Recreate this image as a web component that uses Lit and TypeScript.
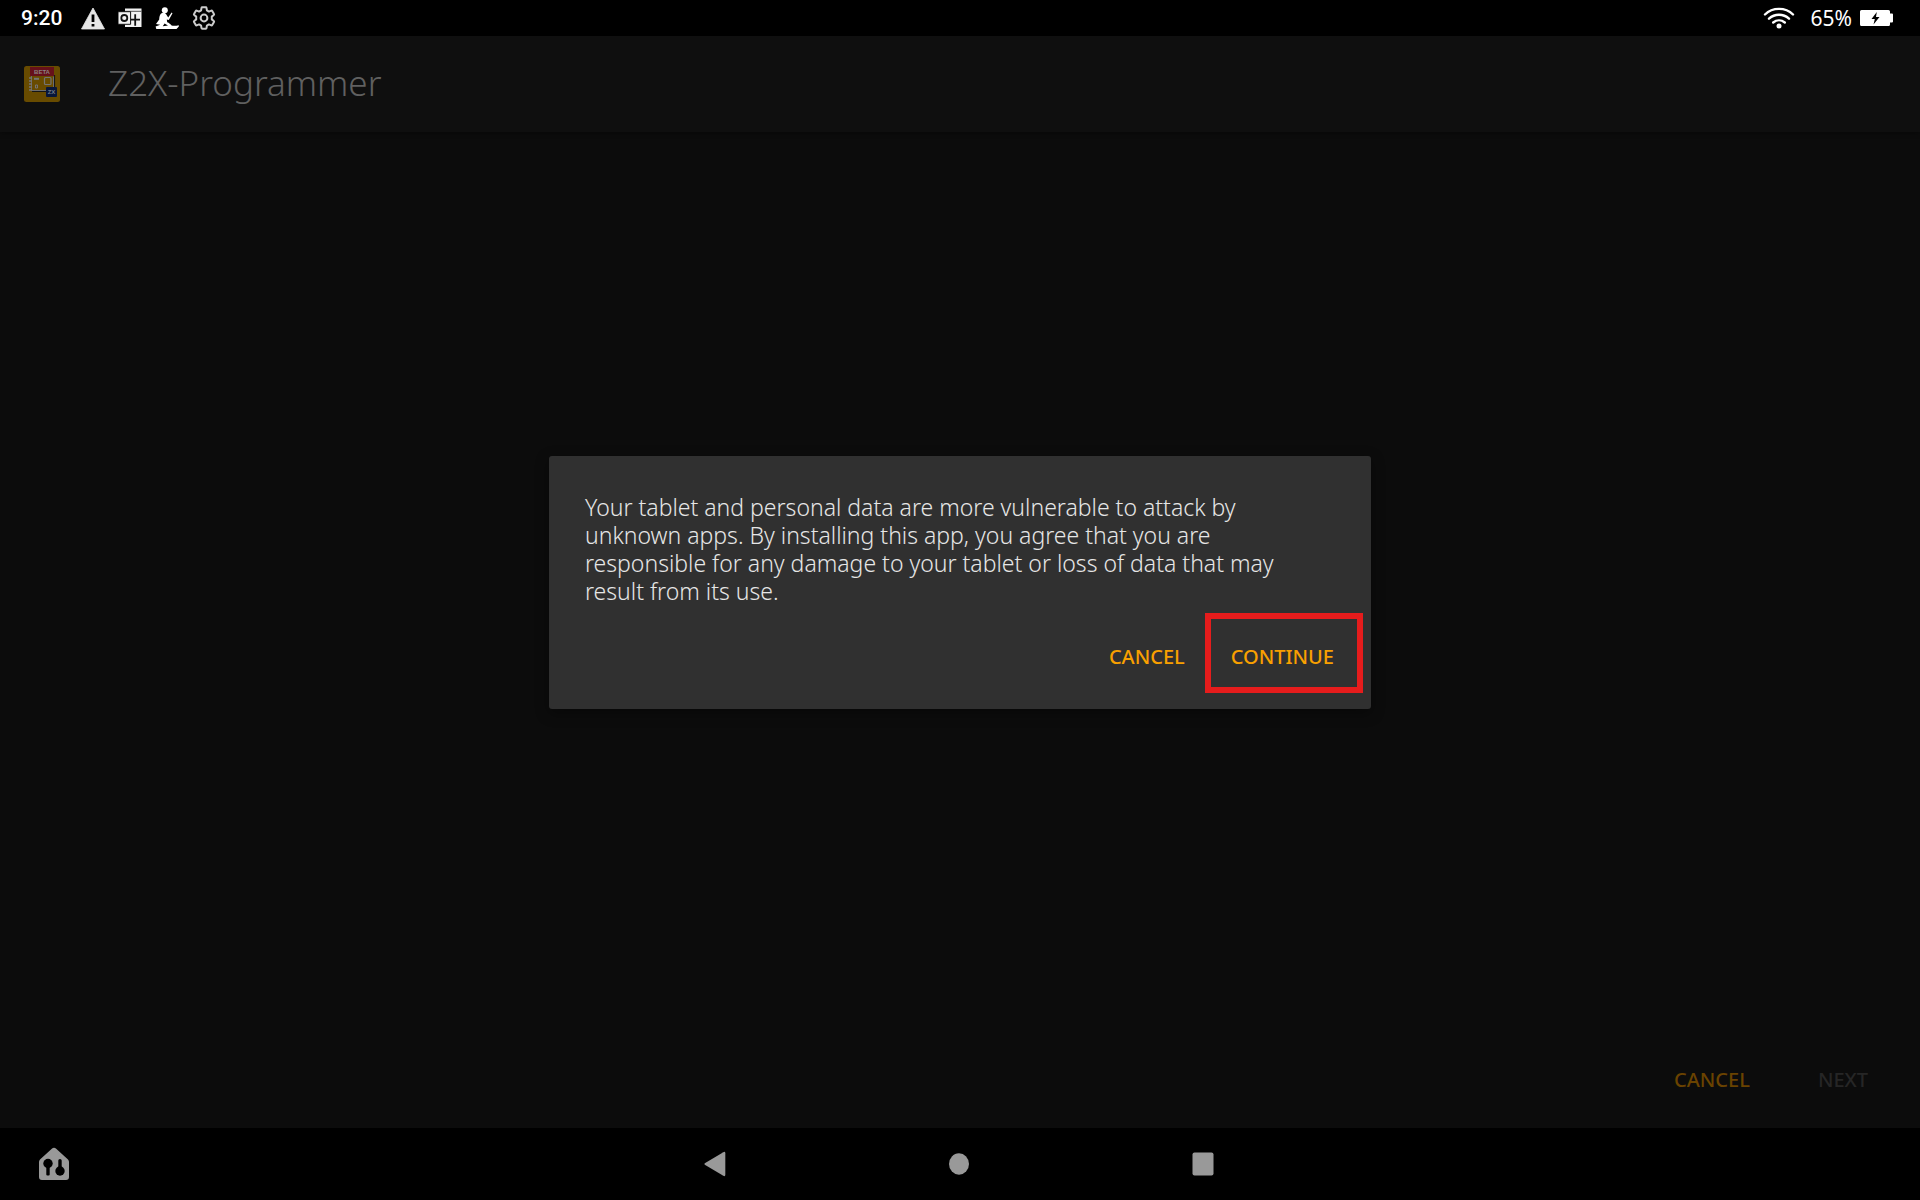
import { LitElement, html, css } from "lit";
import { customElement } from "lit/decorators.js";

@customElement("status-bar")
export class StatusBar extends LitElement {
  static styles = css`
    :host {
      display: flex;
      align-items: center;
      justify-content: space-between;
      height: 36px;
      padding: 0 26px 0 21px;
      background: #000;
      color: #fff;
    }
    .group {
      display: flex;
      align-items: center;
    }
    .notices {
      gap: 13px;
    }
    .time {
      font: 500 21px/36px Roboto, sans-serif;
      margin-right: 6px;
    }
    .level {
      font: 400 21px/36px "Noto Sans", sans-serif;
      margin: 0 8px 0 16px;
    }
    svg {
      display: block;
    }
  `;

  render() {
    return html`
      <div class="group notices">
        <span class="time">9:20</span>
        <svg width="24" height="24" viewBox="0 0 24 24" role="img" aria-label="Warning">
          <path d="M12 2 23.5 23H.5Z" fill="#e6e6e6" stroke="#e6e6e6" stroke-width=".8" stroke-linejoin="round" />
          <path d="M10.6 8.5h2.8V16h-2.8zM10.6 18h2.8v2.6h-2.8z" fill="#000" />
        </svg>
        <svg width="24" height="24" viewBox="0 0 24 24" role="img" aria-label="Outlook">
          <path d="M7 2.5h16.5V21H7Z" fill="#f2f2f2" />
          <path d="M7 5.3h16.5" stroke="#555" stroke-width="1" />
          <path d="M11 13.6h11M17.2 8.2v11.6" stroke="#111" stroke-width="1.8" />
          <path d="M0 5.7h12.6v12.6H0Z" fill="#f2f2f2" stroke="#111" stroke-width="1" />
          <circle cx="6.3" cy="12" r="3" fill="none" stroke="#111" stroke-width="1.8" />
        </svg>
        <svg width="24" height="24" viewBox="0 0 24 24" role="img" aria-label="Reader">
          <circle cx="9.8" cy="4.2" r="3" fill="#fff" />
          <path
            d="M5.6 8c1.6-1.6 4.2-1.6 5.4 0l2.2 3.6 3.4-5 .9.6-3.7 6.8-2-.6.4 2.8c2 .6 3.3 2 4.4 3.4 2.2.5 5 .2 7.2-.4v1.2L21.500 23H1.300L.6 20.600l4.600-1.800-4.200-.7 3.200-4.600c.1-2 .4-4.200 1.400-5.500Z"
            fill="#fff"
          />
          <path d="M9.600 17.600 13 19.600l-5.200.6Z" fill="#000" />
        </svg>
        <svg width="24" height="24" viewBox="0 0 24 24" role="img" aria-label="Settings">
          <path
            d="M10.200 1.300h3.600q.6 0 .7.6l.4 2.500 2 1.200 2.400-1q.6-.2.900.3l1.800 3.200q.3.500-.2.900l-2 1.600v2.800l2 1.600q.5.400.2.900l-1.800 3.200q-.3.500-.9.300l-2.400-1-2 1.200-.4 2.500q-.1.600-.7.600h-3.600q-.6 0-.7-.6l-.4-2.500-2-1.200-2.400 1q-.6.200-.9-.3L2 15.900q-.3-.500.2-.9l2-1.600v-2.800L2.200 9q-.5-.4-.2-.9l1.800-3.200q.3-.5.900-.3l2.400 1 2-1.200.4-2.500q.1-.6.700-.6Z"
            fill="none"
            stroke="#ccc"
            stroke-width="2"
            stroke-linejoin="round"
          />
          <circle cx="12" cy="12" r="3.4" fill="none" stroke="#ccc" stroke-width="2" />
        </svg>
      </div>
      <div class="group">
        <svg width="32" height="24" viewBox="0 0 32 24" role="img" aria-label="Wi-Fi">
          <g fill="none" stroke="#fff" stroke-width="2.4" stroke-linecap="round">
            <path d="M2 8.5C9.5 1 22.5 1 30 8.5" />
            <path d="M6 12.7c5.7-5.2 14.3-5.2 20 0" />
            <path d="M10.2 16.5c3.5-2.9 8.1-2.9 11.6 0" />
          </g>
          <circle cx="16" cy="19.9" r="2.5" fill="#fff" />
        </svg>
        <span class="level">65%</span>
        <svg width="34" height="18" viewBox="0 0 34 18" role="img" aria-label="Battery charging">
          <path
            d="M1.5 1h27q1.5 0 1.5 1.5v2h2q1 0 1 1v7q0 1-1 1h-2v2q0 1.5-1.5 1.5h-27Q0 17 0 15.5v-13Q0 1 1.5 1Z"
            fill="#fff"
          />
          <path d="M16.8 3 11.5 10h3.3l-1.3 5.5 6-7.6h-3.5Z" fill="#000" />
        </svg>
      </div>
    `;
  }
}

@customElement("nav-bar")
export class NavBar extends LitElement {
  static styles = css`
    :host {
      display: grid;
      grid-template-columns: 1fr auto 1fr;
      align-items: center;
      height: 72px;
      padding-right: 2px;
      background: #000;
    }
    button {
      display: grid;
      place-items: center;
      width: 48px;
      height: 48px;
      margin: 0;
      padding: 0;
      border: 0;
      background: none;
    }
    .dash {
      margin-left: 30px;
    }
    .keys {
      display: flex;
      gap: 196px;
    }
    svg {
      display: block;
      fill: #999;
    }
  `;

  render() {
    return html`
      <button class="dash" aria-label="Device dashboard">
        <svg width="32" height="34" viewBox="0 0 32 34">
          <path d="M13.8 1.8q2.2-2 4.4 0L30 12.5q1 1 1 2.5v15q0 3-3 3H4q-3 0-3-3V15q0-1.5 1-2.5Z" />
          <g fill="#000">
            <circle cx="10" cy="16.5" r="4.7" />
            <path d="M8.3 18h3.4v9.5q0 1-1 1H9.3q-1 0-1-1ZM20.3 24V13.5q0-1.5 1.7-1.5t1.7 1.5V24Z" />
            <circle cx="22" cy="24" r="4.7" />
          </g>
        </svg>
      </button>
      <div class="keys">
        <button aria-label="Back">
          <svg width="22" height="26" viewBox="0 0 22 26">
            <path d="M1.2 12 19.3 1.2q2-1 2 1v21.6q0 2-2 1L1.2 14q-1.6-1 0-2Z" />
          </svg>
        </button>
        <button aria-label="Home">
          <svg width="22" height="22" viewBox="0 0 22 22">
            <ellipse cx="11" cy="11" rx="10" ry="10.7" />
          </svg>
        </button>
        <button aria-label="Recent apps">
          <svg width="22" height="24" viewBox="0 0 22 24"><rect x=".5" y=".5" width="21" height="23" rx="2" /></svg>
        </button>
      </div>
    `;
  }
}

@customElement("app-root")
export class AppRoot extends LitElement {
  static styles = css`
    :host {
      display: flex;
      flex-direction: column;
      min-height: 100vh;
      background: #0c0c0c;
      font-family: "Noto Sans", "Open Sans", sans-serif;
    }
    .screen {
      position: relative;
      flex: 1;
      display: flex;
      flex-direction: column;
      justify-content: space-between;
    }
    .appbar {
      display: flex;
      align-items: center;
      gap: 48px;
      height: 96px;
      padding: 0 24px;
      background: #0f0f0f;
      box-shadow: 0 1px 5px rgba(0, 0, 0, 0.4);
    }
    h1 {
      margin: 0;
      padding-bottom: 2px;
      font-size: 35px;
      line-height: 48px;
      font-weight: 300;
      color: #606060;
    }
    .logo {
      display: block;
    }
    .tag {
      font: 700 6px "Liberation Sans", sans-serif;
      text-anchor: middle;
    }
    .actions {
      display: flex;
      justify-content: flex-end;
      gap: 20px;
      padding: 0 28px 24px;
    }
    button {
      margin: 0;
      padding: 0 24px;
      height: 48px;
      border: 0;
      background: none;
      font: 500 20px/48px "Noto Sans", sans-serif;
      color: #f9a000;
    }
    .dim {
      color: #6a4300;
    }
    .dim:disabled {
      color: #262626;
    }
    .overlay {
      position: absolute;
      inset: 0;
      display: grid;
      place-items: center;
    }
    .dialog {
      box-sizing: border-box;
      width: 100%;
      max-width: 822px;
      padding: 37px 14px 28px 36px;
      border-radius: 3px;
      background: #303030;
      box-shadow: 0 4px 14px rgba(0, 0, 0, 0.4);
    }
    p {
      margin: 0 48px 28px 0;
      font-size: 23px;
      line-height: 28px;
      font-weight: 300;
      color: #e6e6e6;
    }
    .choices {
      display: flex;
      justify-content: flex-end;
    }
    .choices button {
      padding: 0 23px;
    }
    .marked {
      position: relative;
    }
    .marker {
      position: absolute;
      inset: -20px -6px -12px -3px;
      border: 6px solid #e61c1c;
      pointer-events: none;
    }
  `;

  render() {
    return html`
      <status-bar></status-bar>
      <main class="screen">
        <header class="appbar">
          <svg class="logo" width="36" height="36" viewBox="0 0 36 36" aria-hidden="true">
            <rect width="36" height="36" rx="2.5" fill="#684b00" />
            <path d="M30.5 9v12M8 25.5h14" stroke="#161616" stroke-width="1.2" />
            <path d="M7.5 10v14.5H22M29.5 10.5v11" fill="none" stroke="#6c6c6c" />
            <path d="M5 12h3M5 15h3M5 18h3M5 21h3M5 24h3" stroke="#747474" stroke-width="1.5" />
            <path d="M10 12.8h5" stroke="#747474" stroke-width="2" />
            <rect x="20.5" y="11.5" width="6.5" height="7" rx="1" fill="none" stroke="#747474" stroke-width="1.2" />
            <path d="M11.5 19h2v3h-2z" fill="none" stroke="#747474" />
            <rect x="6" y="1" width="24" height="9" fill="#66101a" />
            <text class="tag" x="18" y="8" fill="#8c8080">BETA</text>
            <rect x="22" y="21" width="11" height="10" rx="1" fill="#08163a" />
            <text class="tag" x="27.5" y="28" fill="#747c88">ZX</text>
          </svg>
          <h1>Z2X-Programmer</h1>
        </header>
        <div class="actions">
          <button class="dim">CANCEL</button>
          <button class="dim" disabled>NEXT</button>
        </div>
        <div class="overlay">
          <section class="dialog" role="alertdialog" aria-modal="true" aria-describedby="notice">
            <p id="notice">
              Your tablet and personal data are more vulnerable to attack by unknown apps. By installing this app, you
              agree that you are responsible for any damage to your tablet or loss of data that may result from its use.
            </p>
            <div class="choices">
              <button>CANCEL</button>
              <div class="marked">
                <button>CONTINUE</button>
                <div class="marker"></div>
              </div>
            </div>
          </section>
        </div>
      </main>
      <nav-bar></nav-bar>
    `;
  }
}
